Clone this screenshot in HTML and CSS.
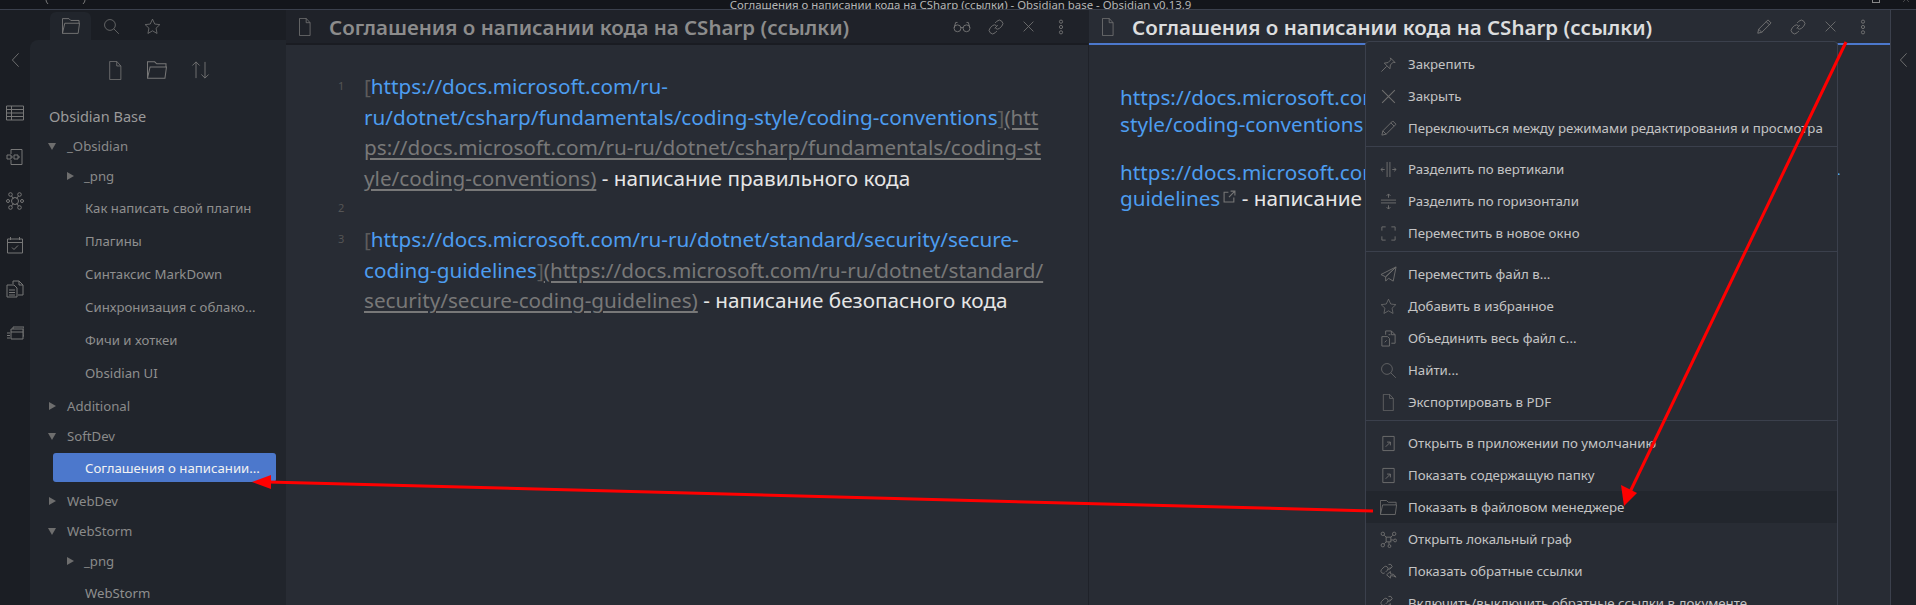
FILE: index.html
```html
<!DOCTYPE html>
<html lang="ru">
<head>
<meta charset="utf-8">
<title>Obsidian</title>
<link rel="stylesheet" href="styles.css">
</head>
<body>
<svg class="defs" width="0" height="0">
  <symbol id="i-file" viewBox="3 1 15 23"><path d="M3.500 1.500h8.500l5 5.500v16.500h-13.500z M12 1.500v5.500h5"/></symbol>
  <symbol id="i-folder" viewBox="2 3 19.500 17"><path d="M2.500 19.500v-16h7l2 2h9v3 M2.500 19.500h17l1.500-11h-16z"/></symbol>
  <symbol id="i-search" viewBox="0 0 22 22"><circle cx="9" cy="9" r="7"/><path d="M14 14l6.500 6.500"/></symbol>
  <symbol id="i-star" viewBox="0 0 22 22"><path d="M11 1.500l2.900 6.300 6.600.8-4.900 4.600 1.300 6.800-5.900-3.400-5.900 3.400 1.300-6.800-4.900-4.600 6.600-.8z"/></symbol>
  <symbol id="i-sort" viewBox="1 1 20 20"><path d="M6 20V2M2 6l4-4 4 4M16 2v18M12 16l4 4 4-4"/></symbol>
  <symbol id="i-chev" viewBox="0 0 10 18"><path d="M8.500 1.500L1.500 9l7 7.500"/></symbol>
  <symbol id="i-x" viewBox="0 0 16 16"><path d="M2 2l12 12M14 2L2 14"/></symbol>
  <symbol id="i-dots" viewBox="0 0 8 18"><circle cx="4" cy="3" r="1.800"/><circle cx="4" cy="9" r="1.800"/><circle cx="4" cy="15" r="1.800"/></symbol>
  <symbol id="i-link" viewBox="0 0 18 18"><path d="M7.500 10.500L11 7M8 4.500l2-2a3.500 3.500 0 0 1 5.500 5.500l-2.500 2.500a3.500 3.500 0 0 1-4.500 0M10 13.500l-2 2a3.500 3.500 0 0 1-5.500-5.500l2.500-2.500a3.500 3.500 0 0 1 4.500 0"/></symbol>
  <symbol id="i-glasses" viewBox="0 0 20 14"><circle cx="5" cy="9" r="3.800"/><circle cx="15" cy="9" r="3.800"/><path d="M8.800 8.500q1.200-1 2.400 0M1.200 8.500L3 2.500h2M18.800 8.500L17 2.500h-2"/></symbol>
  <symbol id="i-pencil" viewBox="0 0 18 18"><path d="M2 16l1-4.500L13.500 1l3.500 3.500L6.500 15z M3 11.500l3.500 3.500M11.500 3l3.500 3.500"/></symbol>
  <symbol id="i-pin" viewBox="0 0 18 18"><path d="M1.500 16.500L7 11M4.500 7.500l6 6 .5-4 3-3 2 .5-5-5 .5 2-3 3z"/></symbol>
  <symbol id="i-vsplit" viewBox="0 0 18 18"><path d="M7.500 1v16M10.500 1v16M5 9H1M3 7L1 9l2 2M13 9h4M15 7l2 2-2 2"/></symbol>
  <symbol id="i-hsplit" viewBox="0 0 18 18"><path d="M1 7.500h16M1 10.500h16M9 5V1M7 3l2-2 2 2M9 13v4M7 15l2 2 2-2"/></symbol>
  <symbol id="i-expand" viewBox="0 0 18 18"><path d="M2 6V2h4M12 2h4v4M16 12v4h-4M6 16H2v-4"/></symbol>
  <symbol id="i-send" viewBox="0 0 18 18"><path d="M17 1L1 9l5 2.500zM17 1L6 11.500V16l3-3M17 1l-3 15-5-3"/></symbol>
  <symbol id="i-merge" viewBox="0 0 18 18"><path d="M6 5V1h6l4 4v9h-4M12 1v4h4M2 7h6l2 2v8H2z"/><path d="M5 13l2-2M9 5h2"/></symbol>
  <symbol id="i-open" viewBox="0 0 18 18"><path d="M3 1.500h12v15H3zM6 12.500l5-5M7.500 7.500H11V11"/></symbol>
  <symbol id="i-lgraph" viewBox="0 0 18 18"><rect x="6.500" y="6.500" width="5" height="5"/><circle cx="3" cy="3" r="1.800"/><circle cx="15" cy="3" r="1.800"/><circle cx="3" cy="15" r="1.800"/><circle cx="10" cy="16" r="1.500"/><circle cx="16" cy="10" r="1.500"/><path d="M4.500 4.500l2 2M13.500 4.500l-2 2M4.500 13.500l2-2M9.500 11.500v3M11.500 9.500h3"/></symbol>
  <symbol id="i-back" viewBox="0 0 18 18"><path d="M6 9.500l2-2a2.500 2.500 0 0 0-3.500-3.500l-3 3a2.500 2.500 0 0 0 3.500 3.500M8 7.500L11 4.500M9 1.500h2.500L13 4l-3 3M17 15q-2-4-6-3.500V9l-4 3.500 4 3.500v-2.500q3-.5 6 1.500z"/></symbol>
  <symbol id="i-table" viewBox="0 0 18 16"><path d="M.5 1h17v14H.5zM.5 4.500h17M.5 8h17M.5 11.500h17M5.500 1v14"/></symbol>
  <symbol id="i-flow" viewBox="0 0 18 18"><path d="M5 1.500h11v15H5V12M5 6V1.500M1 7h4v4H1zM5 9h2M8 7h4v4H8zM12 9h2"/></symbol>
  <symbol id="i-graph" viewBox="0 0 18 18"><circle cx="9" cy="9" r="3.500"/><circle cx="4.500" cy="2.500" r="1.800"/><circle cx="13.500" cy="2.500" r="1.800"/><circle cx="2" cy="9" r="1.500"/><circle cx="16" cy="9" r="1.500"/><circle cx="4.500" cy="15.500" r="1.800"/><circle cx="13.500" cy="15.500" r="1.800"/><path d="M5.500 4l2 2.500M12.500 4l-2 2.500M5.500 14l2-2.500M12.500 14l-2-2.500"/></symbol>
  <symbol id="i-cal" viewBox="0 0 18 18"><path d="M1.500 3h15v14h-15zM1.500 6.500h15M4.500 1v3M13.500 1v3M6 11.500l2 2 4-4"/></symbol>
  <symbol id="i-copy" viewBox="0 0 18 18"><path d="M7 4V1h6l4 4v10h-5M13 1v4h4M1 5h7l3 3v9H1zM3 10h6M3 12.500h6M3 15h6"/></symbol>
  <symbol id="i-stack" viewBox="0 0 18 16"><path d="M5 4h12v10H5zM7 4V2h11v9h-1M5 7h12M1 8h3M1 10.500h3M1 13h3"/></symbol>
  <symbol id="i-ext" viewBox="0 0 12 12"><path d="M5 2H1v9h9V7M7 1h4v4M11 1L5.500 6.500"/></symbol>
</svg>

<div class="app">
  <header class="titlebar">
    <div class="win-side win-nav">
      <svg class="ic nav-chev" viewBox="0 0 6 10"><path d="M5 -4Q1 0 5 4"/></svg>
      <svg class="ic nav-chev" viewBox="0 0 6 10"><path d="M1 -4Q5 0 1 4"/></svg>
    </div>
    <span class="wintitle">Соглашения о написании кода на CSharp (ссылки) - Obsidian base - Obsidian v0.13.9</span>
    <div class="win-side win-ctrl">
      <span class="win-max"></span>
      <svg class="ic win-close"><use href="#i-x"/></svg>
    </div>
  </header>

  <div class="main">
    <nav class="ribbon">
      <svg class="ic ic-chev"><use href="#i-chev"/></svg>
      <div class="ribbon-icons">
        <svg class="ic rb"><use href="#i-table"/></svg>
        <svg class="ic rb"><use href="#i-flow"/></svg>
        <svg class="ic rb"><use href="#i-graph"/></svg>
        <svg class="ic rb"><use href="#i-cal"/></svg>
        <svg class="ic rb"><use href="#i-copy"/></svg>
        <svg class="ic rb"><use href="#i-stack"/></svg>
      </div>
    </nav>

    <aside class="sidebar">
      <div class="side-tabs">
        <div class="side-tab active"><svg class="ic s20"><use href="#i-folder"/></svg></div>
        <div class="side-tab"><svg class="ic s18"><use href="#i-search"/></svg></div>
        <div class="side-tab"><svg class="ic s18"><use href="#i-star"/></svg></div>
      </div>
      <div class="side-panel">
        <div class="side-tools">
          <svg class="ic t-file"><use href="#i-file"/></svg>
          <svg class="ic t-folder"><use href="#i-folder"/></svg>
          <svg class="ic t-sort"><use href="#i-sort"/></svg>
        </div>
        <div class="vault">Obsidian Base</div>
        <div class="row folder open"><i class="tri down"></i>_Obsidian</div>
        <div class="group">
          <div class="row folder sub"><i class="tri right"></i>_png</div>
          <div class="row file">Как написать свой плагин</div>
          <div class="row file">Плагины</div>
          <div class="row file">Синтаксис MarkDown</div>
          <div class="row file">Синхронизация с облако...</div>
          <div class="row file">Фичи и хоткеи</div>
          <div class="row file">Obsidian UI</div>
        </div>
        <div class="row folder"><i class="tri right"></i>Additional</div>
        <div class="row folder"><i class="tri down"></i>SoftDev</div>
        <div class="group">
          <div class="row file active"><span class="file-label">Соглашения о написании...</span></div>
        </div>
        <div class="row folder"><i class="tri right"></i>WebDev</div>
        <div class="row folder"><i class="tri down"></i>WebStorm</div>
        <div class="row folder sub"><i class="tri right"></i>_png</div>
        <div class="row file">WebStorm</div>
      </div>
    </aside>

    <section class="pane pane-left">
      <div class="pane-head">
        <svg class="ic head-file"><use href="#i-file"/></svg>
        <div class="pane-title">Соглашения о написании кода на CSharp (ссылки)</div>
        <div class="pane-actions">
          <svg class="ic a-glasses"><use href="#i-glasses"/></svg>
          <svg class="ic a-ic"><use href="#i-link"/></svg>
          <svg class="ic a-x"><use href="#i-x"/></svg>
          <svg class="ic a-dots"><use href="#i-dots"/></svg>
        </div>
      </div>
      <div class="source">
        <div class="src-line"><span class="num">1</span><div class="src-text"><span class="mark">[</span><span class="lnk">https://docs.microsoft.com/ru-<br>ru/dotnet/csharp/fundamentals/coding-style/coding-conventions</span><span class="mark">]</span><span class="url">(htt<br>ps://docs.microsoft.com/ru-ru/dotnet/csharp/fundamentals/coding-st<br>yle/coding-conventions)</span> <span class="txt">- написание правильного кода</span></div></div>
        <div class="src-line"><span class="num">2</span><div class="src-text">&nbsp;</div></div>
        <div class="src-line"><span class="num">3</span><div class="src-text"><span class="mark">[</span><span class="lnk">https://docs.microsoft.com/ru-ru/dotnet/standard/security/secure-<br>coding-guidelines</span><span class="mark">]</span><span class="url">(https://docs.microsoft.com/ru-ru/dotnet/standard/<br>security/secure-coding-guidelines)</span> <span class="txt">- написание безопасного кода</span></div></div>
      </div>
    </section>

    <section class="pane pane-right">
      <div class="pane-head">
        <svg class="ic head-file"><use href="#i-file"/></svg>
        <div class="pane-title">Соглашения о написании кода на CSharp (ссылки)</div>
        <div class="pane-actions">
          <svg class="ic a-ic"><use href="#i-pencil"/></svg>
          <svg class="ic a-ic"><use href="#i-link"/></svg>
          <svg class="ic a-x"><use href="#i-x"/></svg>
          <svg class="ic a-dots"><use href="#i-dots"/></svg>
        </div>
      </div>
      <div class="preview">
        <p><span class="lnk">https://docs.microsoft.com/ru-ru/dotnet/csharp/fundamentals/coding-<br>style/coding-conventions</span> <span class="txt">- написание правильного кода</span></p>
        <p><span class="lnk">https://docs.microsoft.com/ru-ru/dotnet/standard/security/secure-coding-<br>guidelines</span><svg class="ic ext"><use href="#i-ext"/></svg> <span class="txt">- написание безопасного кода</span></p>
      </div>
    </section>

    <aside class="rside"><svg class="ic ic-chev"><use href="#i-chev"/></svg></aside>
  </div>

  <div class="menu">
    <div class="menu-group">
      <div class="mi"><svg class="ic mic"><use href="#i-pin"/></svg>Закрепить</div>
      <div class="mi"><svg class="ic mic"><use href="#i-x"/></svg>Закрыть</div>
      <div class="mi"><svg class="ic mic"><use href="#i-pencil"/></svg>Переключиться между режимами редактирования и просмотра</div>
    </div>
    <div class="menu-group">
      <div class="mi"><svg class="ic mic"><use href="#i-vsplit"/></svg>Разделить по вертикали</div>
      <div class="mi"><svg class="ic mic"><use href="#i-hsplit"/></svg>Разделить по горизонтали</div>
      <div class="mi"><svg class="ic mic"><use href="#i-expand"/></svg>Переместить в новое окно</div>
    </div>
    <div class="menu-group">
      <div class="mi"><svg class="ic mic"><use href="#i-send"/></svg>Переместить файл в...</div>
      <div class="mi"><svg class="ic mic"><use href="#i-star"/></svg>Добавить в избранное</div>
      <div class="mi"><svg class="ic mic"><use href="#i-merge"/></svg>Объединить весь файл с...</div>
      <div class="mi"><svg class="ic mic"><use href="#i-search"/></svg>Найти...</div>
      <div class="mi"><svg class="ic mic"><use href="#i-file"/></svg>Экспортировать в PDF</div>
    </div>
    <div class="menu-group">
      <div class="mi"><svg class="ic mic"><use href="#i-open"/></svg>Открыть в приложении по умолчанию</div>
      <div class="mi"><svg class="ic mic"><use href="#i-open"/></svg>Показать содержащую папку</div>
      <div class="mi hover"><svg class="ic mic"><use href="#i-folder"/></svg>Показать в файловом менеджере</div>
      <div class="mi"><svg class="ic mic"><use href="#i-lgraph"/></svg>Открыть локальный граф</div>
      <div class="mi"><svg class="ic mic"><use href="#i-back"/></svg>Показать обратные ссылки</div>
      <div class="mi"><svg class="ic mic"><use href="#i-back"/></svg>Включить/выключить обратные ссылки в документе</div>
    </div>
  </div>

  <svg class="arrows" viewBox="0 0 1916 605">
    <path class="arrow-line" d="M1846 42L1630 492"/>
    <path class="arrow-head" d="M1624 506L1621 485L1637 493z"/>
    <path class="arrow-line" d="M1373 511L268 482"/>
    <path class="arrow-head" d="M252 482L271 475L271 489z"/>
  </svg>
</div>
</body>
</html>
```

FILE: styles.css
```css
* { box-sizing: border-box; }
html, body { margin: 0; padding: 0; height: 100%; overflow: hidden; background: #1b1e24; }
body { font-family: "Noto Sans", "Open Sans", sans-serif; color: #dcddde; }
.defs { position: absolute; }

.app { position: relative; width: 1916px; height: 605px; overflow: hidden; display: flex; flex-direction: column; }

.ic { fill: none; stroke: #777; stroke-width: 1; display: block; flex: none; overflow: visible; }

.titlebar { height: 10px; flex: none; background: #14161b; border-bottom: 1px solid #3b404c; overflow: hidden; display: flex; align-items: flex-end; }
.win-side { flex: 1; display: flex; height: 9px; align-items: flex-start; }
.win-nav { padding-left: 43px; gap: 33px; }
.nav-chev { width: 6px; height: 10px; }
.win-ctrl { justify-content: flex-end; padding-right: 6px; gap: 22px; }
.win-max { display: block; width: 8px; height: 4px; margin-top: -1px; border: 1px solid #888; }
.win-close { width: 8px; height: 8px; margin-top: -5px; }
.wintitle { font-size: 11.400px; color: #b5b5b5; line-height: 18px; margin-bottom: -5px; white-space: nowrap; padding-right: 32px; }

.main { flex: 1; display: flex; min-height: 0; }

.ribbon { width: 30px; flex: none; background: #1b1e24; display: flex; flex-direction: column; align-items: center; padding-top: 42px; }
.ribbon .ic-chev { width: 9px; height: 16px; }
.ribbon-icons { margin-top: 36px; display: flex; flex-direction: column; gap: 26px; align-items: center; }
.rb { width: 18px; height: 18px; }

.sidebar { width: 256px; flex: none; display: flex; flex-direction: column; background: #1b1e24; }
.side-tabs { height: 30px; flex: none; display: flex; padding: 2px 0 0 20px; gap: 0; }
.side-tab { width: 41px; height: 28px; display: flex; align-items: center; justify-content: center; border-radius: 6px 6px 0 0; }
.side-tab.active { background: #21252c; }
.s20 { width: 18px; height: 16px; }
.s18 { width: 17px; height: 17px; }

.side-panel { flex: 1; background: #21252c; border-radius: 8px 0 0 0; overflow: hidden; font-size: 13.200px; }
.side-tools { height: 60px; display: flex; align-items: center; padding-left: 78px; gap: 24px; }
.t-file { width: 15px; height: 19px; }
.t-folder { width: 20px; height: 18px; }
.t-sort { width: 19px; height: 18px; }

.vault { font-size: 14.500px; color: #9a9a9a; height: 31px; line-height: 32px; padding-left: 19px; }

.row { display: flex; align-items: center; white-space: nowrap; color: #8f8f8f; }
.folder { height: 30px; padding-left: 37px; position: relative; color: #8a8a8a; }
.folder.sub { padding-left: 54px; }
.file { height: 33px; padding-left: 55px; color: #8f8f8f; }
.group { padding-bottom: 2px; }
.tri { position: absolute; left: 18px; top: 11px; width: 0; height: 0; }
.sub .tri { left: 36px; }
.tri.down { border-left: 4px solid transparent; border-right: 4px solid transparent; border-top: 7px solid #6e6e6e; left: 18px; top: 12px; }
.tri.right { border-top: 4px solid transparent; border-bottom: 4px solid transparent; border-left: 7px solid #6e6e6e; left: 19px; }
.sub .tri.right { left: 37px; }

.file.active { padding-left: 23px; }
.file-label { display: flex; align-items: center; width: 223px; height: 29px; padding-left: 32px; background: #4c78cc; border-radius: 3px; color: #f2f2f2; }

.pane { display: flex; flex-direction: column; min-width: 0; background: #282c34; }
.pane-left { width: 803px; flex: none; border-right: 1px solid #1f2229; }
.pane-right { flex: 1; border-right: 1px solid #3b404c; }

.pane-head { height: 35px; flex: none; display: flex; align-items: center; }
.pane-left .pane-head { background: #1f2229; border-bottom: 2px solid #1a1c22; }
.pane-right .pane-head { background: #282c34; border-bottom: 2px solid #4c78cc; }
.head-file { width: 14px; height: 18px; margin-left: 12px; }
.pane-title { margin-left: 17px; font-size: 20.500px; font-weight: 600; white-space: nowrap; color: #8c8c8c; }
.pane-right .pane-title { color: #dcddde; }
.pane-actions { margin-left: auto; display: flex; align-items: center; }
.a-glasses { width: 18px; height: 13px; margin-right: 17px; }
.a-ic { width: 16px; height: 16px; margin-right: 18px; }
.a-x { width: 13px; height: 13px; margin-right: 22px; }
.a-dots { width: 8px; height: 16px; margin-right: 23px; }

.source { padding-top: 26px; font-size: 20.700px; line-height: 30.600px; }
.src-line { display: flex; }
.num { width: 78px; flex: none; font-size: 11px; padding-left: 52px; color: #555; }
.src-text { white-space: nowrap; }
.lnk { color: #4d9df0; }
.mark { color: #5c5c5c; }
.url { color: #787878; text-decoration: underline; text-underline-offset: 3px; }
.txt { color: #e6e6e6; }

.preview { padding: 39px 0 0 31px; font-size: 20.700px; line-height: 26.800px; white-space: nowrap; }
.preview p { margin: 0 0 21px; }
.ext { display: inline-block; width: 13px; height: 13px; margin: 0 0 9px 3px; vertical-align: middle; }

.rside { width: 25px; flex: none; background: #1f2229; display: flex; justify-content: center; padding-top: 42px; }
.rside .ic-chev { width: 9px; height: 16px; }

.menu { position: absolute; left: 1365px; top: 41px; width: 473px; background: #282c34; border: 1px solid #3b404c; border-radius: 4px; font-size: 13.250px; color: #c4c4c4; }
.menu-group { padding: 6px 0 2px; border-bottom: 1px solid #3b404c; }
.menu-group:last-child { border-bottom: 0; }
.mi { height: 32px; display: flex; align-items: center; padding-left: 14px; white-space: nowrap; gap: 11px; }
.mi.hover { background: #22262d; }
.mic { width: 17px; height: 17px; stroke: #6e6e6e; }

.arrows { position: absolute; left: 0; top: 0; width: 1916px; height: 605px; pointer-events: none; }
.arrow-line { stroke: #f00; stroke-width: 3; fill: none; }
.arrow-head { fill: #f00; stroke: none; }
```
